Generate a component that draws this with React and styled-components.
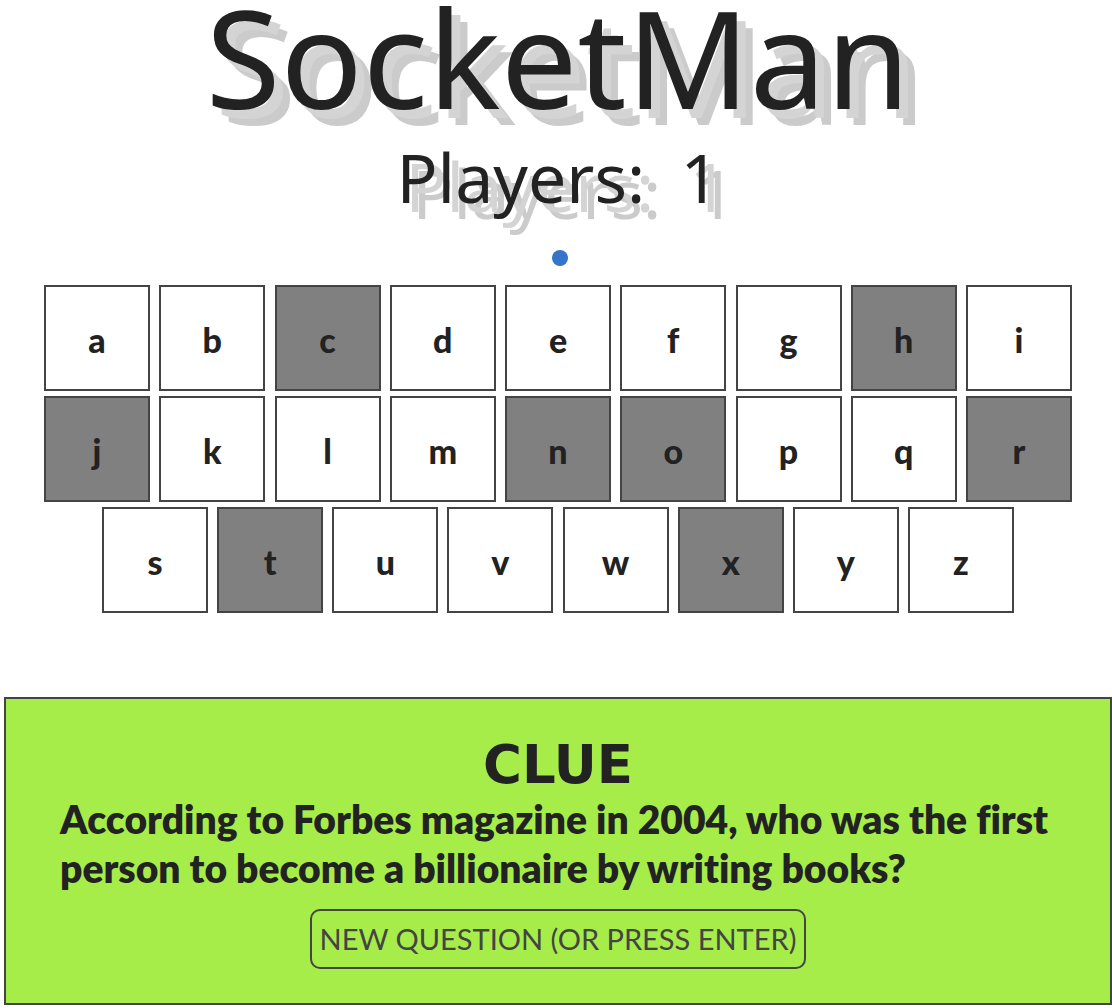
import React, { useState } from "react";
import styled, { createGlobalStyle } from "styled-components";

const GlobalStyle = createGlobalStyle`
  *, *::before, *::after { box-sizing: border-box; }
  body {
    margin: 0;
    background: #fff;
    color: #222;
    font-family: Lato, "Gill Sans", sans-serif;
    font-variant-ligatures: none;
  }
`;

const Page = styled.main`
  display: flex;
  flex-direction: column;
  padding-left: 4px;
`;

const Header = styled.header`
  display: flex;
  flex-direction: column;
  align-items: center;
  font-family: "Noto Sans", sans-serif;
  text-shadow: 9px 9px #d4d4d4, 16px 16px #cbcbcb;
`;

const Title = styled.h1`
  margin: 0;
  font-size: 136px;
  line-height: 114px;
  font-weight: 400;
`;

const Players = styled.h2`
  margin: 0;
  padding-top: 19px;
  font-size: 68px;
  line-height: 88px;
  font-weight: 400;
  white-space: pre;
`;

const Dot = styled.span`
  align-self: center;
  width: 16px;
  height: 16px;
  margin: 29px 0 19px 4px;
  border-radius: 50%;
  background: #3574c8;
`;

const Keyboard = styled.section`
  display: flex;
  flex-direction: column;
  gap: 5px;
  padding: 0 40px;
`;

const KeyRow = styled.div`
  display: flex;
  justify-content: space-between;
  padding: 0 ${(p) => (p.$inset ? "58px" : "0")};
`;

const Key = styled.button`
  width: 106px;
  height: 106px;
  padding: 4px 0 0;
  border: 2px solid #444;
  background: ${(p) => (p.$used ? "#808080" : "#fff")};
  color: #222;
  font: 900 34px/40px Lato, "Gill Sans", sans-serif;
`;

const CluePanel = styled.section`
  display: flex;
  flex-direction: column;
  align-items: center;
  margin-top: 84px;
  padding: 35px 54px 34px;
  border: 2px solid #444;
  background: #a6ed49;
`;

const ClueTitle = styled.h2`
  margin: 0;
  font-family: "DejaVu Sans", sans-serif;
  font-size: 53px;
  line-height: 61px;
  font-weight: 700;
`;

const ClueText = styled.p`
  align-self: stretch;
  margin: 0;
  font-size: 39px;
  line-height: 49px;
  font-weight: 800;
`;

const NewQuestion = styled.button`
  height: 60px;
  margin-top: 16px;
  padding: 0 8px;
  border: 2px solid #444;
  border-radius: 10px;
  background: transparent;
  color: #444;
  font: 400 29px/36px Lato, "Gill Sans", sans-serif;
`;

const ROWS = ["abcdefghi", "jklmnopqr", "stuvwxyz"];

export default function App() {
  const [used, setUsed] = useState([..."chjnortx"]);
  return (
    <>
      <GlobalStyle />
      <Page>
        <Header>
          <Title>SocketMan</Title>
          <Players>{"Players:  1"}</Players>
        </Header>
        <Dot />
        <Keyboard aria-label="Letters">
          {ROWS.map((row) => (
            <KeyRow key={row} $inset={row.length < 9}>
              {[...row].map((letter) => (
                <Key
                  key={letter}
                  type="button"
                  $used={used.includes(letter)}
                  onClick={() => setUsed([...used, letter])}
                >
                  {letter}
                </Key>
              ))}
            </KeyRow>
          ))}
        </Keyboard>
        <CluePanel>
          <ClueTitle>CLUE</ClueTitle>
          <ClueText>
            According to Forbes magazine in 2004, who was the first person to
            become a billionaire by writing books?
          </ClueText>
          <NewQuestion type="button">NEW QUESTION (OR PRESS ENTER)</NewQuestion>
        </CluePanel>
      </Page>
    </>
  );
}
